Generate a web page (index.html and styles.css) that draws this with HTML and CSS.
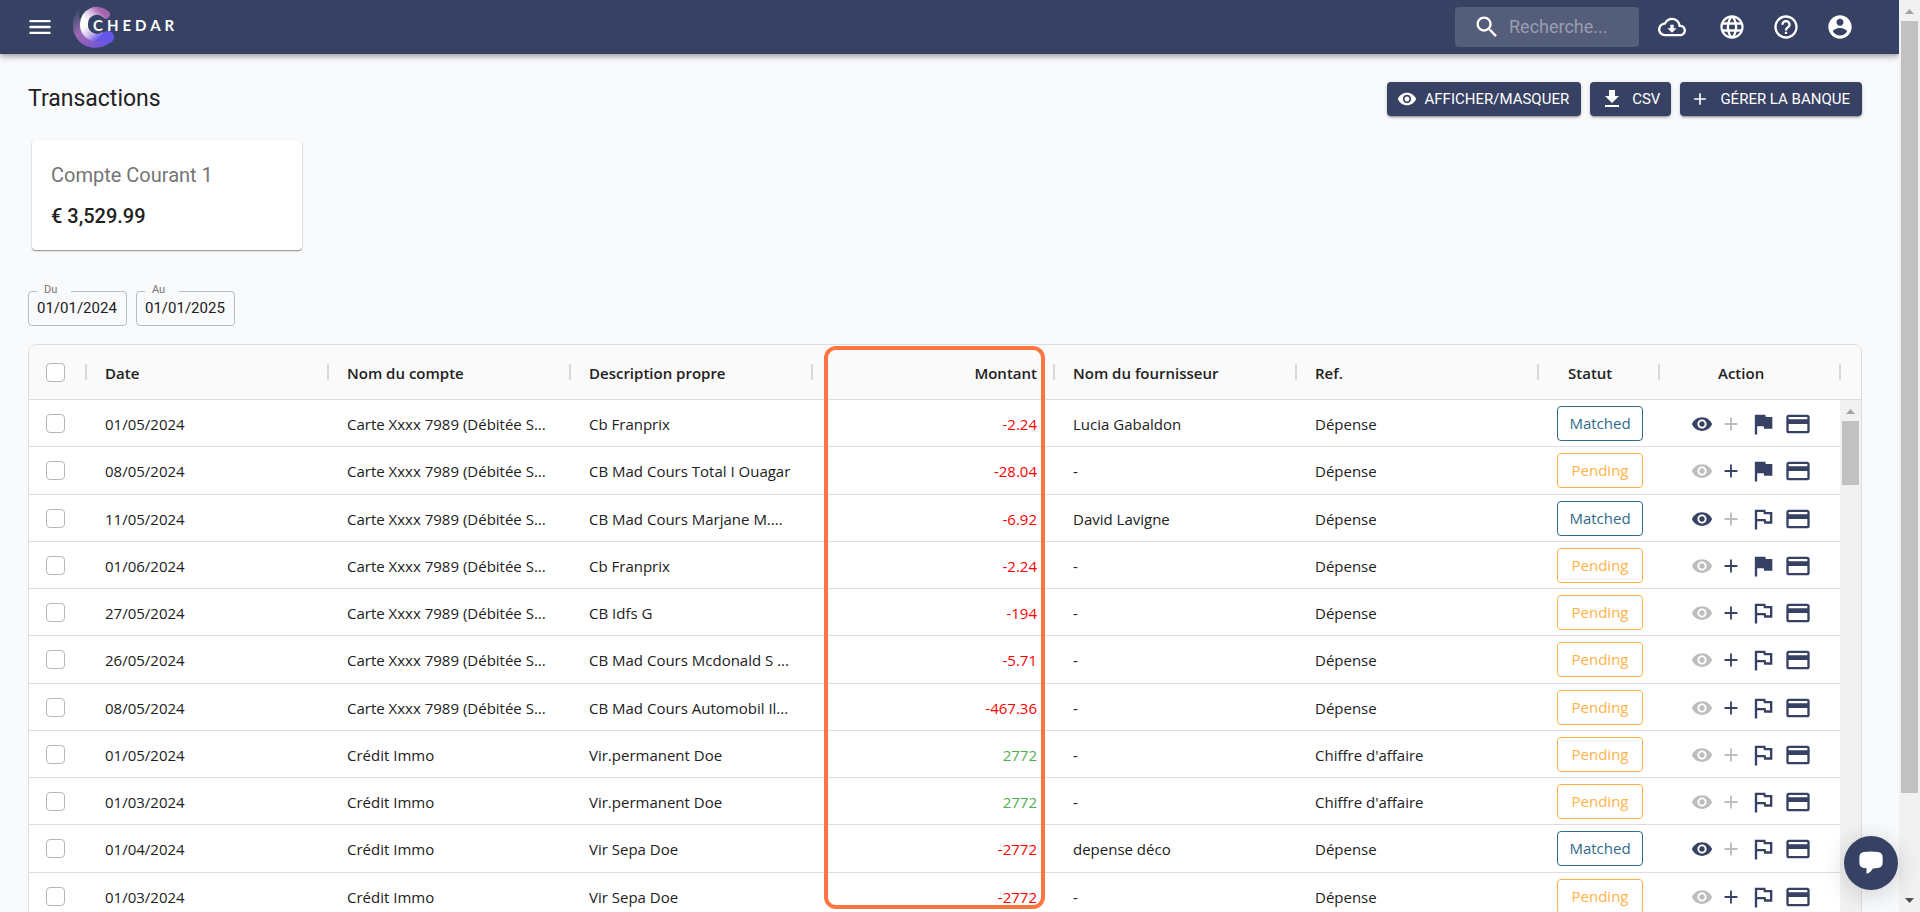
FILE: index.html
```html
<!DOCTYPE html>
<html lang="fr">
<head>
<meta charset="utf-8">
<title>Transactions</title>
<link rel="stylesheet" href="styles.css">
</head>
<body>
<svg class="sprite" aria-hidden="true">
  <symbol id="eye" viewBox="0 0 24 24"><path d="M12 4.5C7 4.5 2.73 7.61 1 12c1.730 4.390 6 7.500 11 7.500s9.270-3.110 11-7.500c-1.730-4.390-6-7.500-11-7.500zM12 17c-2.760 0-5-2.240-5-5s2.240-5 5-5 5 2.240 5 5-2.240 5-5 5zm0-8c-1.660 0-3 1.340-3 3s1.340 3 3 3 3-1.340 3-3-1.340-3-3-3z"/></symbol>
  <symbol id="plus" viewBox="0 0 24 24"><path d="M19 13h-6v6h-2v-6H5v-2h6V5h2v6h6v2z"/></symbol>
  <symbol id="flag" viewBox="0 0 24 24"><path d="M14.400 6 14 4H5v17h2v-7h5.600l.4 2h7V6z"/></symbol>
  <symbol id="flag-o" viewBox="0 0 24 24"><path d="M12.360 6l.4 2H18v6h-3.360l-.4-2H7V6h5.360M14 4H5v17h2v-7h5.600l.4 2h7V6h-5.600L14 4z"/></symbol>
  <symbol id="card" viewBox="0 0 24 24"><path d="M20 4H4c-1.110 0-1.990.89-1.990 2L2 18c0 1.110.89 2 2 2h16c1.110 0 2-.89 2-2V6c0-1.110-.89-2-2-2zm0 14H4v-6h16v6zm0-10H4V6h16v2z"/></symbol>
  <symbol id="menu" viewBox="0 0 24 24"><path d="M3 18h18v-2H3v2zm0-5h18v-2H3v2zm0-7v2h18V6H3z"/></symbol>
  <symbol id="search" viewBox="0 0 24 24"><path d="M15.500 14h-.79l-.28-.27C15.410 12.590 16 11.110 16 9.500 16 5.910 13.090 3 9.500 3S3 5.910 3 9.500 5.910 16 9.500 16c1.610 0 3.090-.59 4.230-1.570l.27.28v.79l5 4.990L20.490 19l-4.990-5zm-6 0C7.010 14 5 11.990 5 9.500S7.010 5 9.500 5 14 7.010 14 9.500 11.990 14 9.500 14z"/></symbol>
  <symbol id="cloud" viewBox="0 0 24 24"><path d="M19.350 10.040C18.670 6.590 15.640 4 12 4 9.110 4 6.600 5.640 5.350 8.040 2.340 8.360 0 10.910 0 14c0 3.310 2.690 6 6 6h13c2.760 0 5-2.240 5-5 0-2.640-2.050-4.780-4.650-4.960zM19 18H6c-2.210 0-4-1.790-4-4 0-2.050 1.530-3.760 3.560-3.970l1.070-.11.5-.95C8.080 7.140 9.940 6 12 6c2.620 0 4.880 1.860 5.390 4.430l.3 1.500 1.530.11c1.560.1 2.780 1.410 2.780 2.960 0 1.650-1.350 3-3 3zm-5.550-8h-2.900v3H8l4 4 4-4h-2.550z"/></symbol>
  <symbol id="globe" viewBox="0 0 24 24"><path d="M11.990 2C6.470 2 2 6.480 2 12s4.470 10 9.990 10C17.520 22 22 17.520 22 12S17.520 2 11.990 2zm6.930 6h-2.950c-.32-1.250-.78-2.450-1.380-3.560 1.840.63 3.370 1.910 4.330 3.560zM12 4.040c.83 1.200 1.480 2.530 1.910 3.960h-3.820c.43-1.430 1.080-2.760 1.910-3.960zM4.260 14C4.100 13.360 4 12.690 4 12s.1-1.360.26-2h3.380c-.08.66-.14 1.320-.14 2s.06 1.340.14 2H4.260zm.82 2h2.950c.32 1.250.78 2.450 1.380 3.560-1.840-.63-3.370-1.900-4.330-3.560zm2.950-8H5.080c.96-1.660 2.490-2.930 4.330-3.560C8.810 5.550 8.350 6.750 8.030 8zM12 19.960c-.83-1.200-1.480-2.530-1.910-3.960h3.820c-.43 1.430-1.080 2.760-1.910 3.960zM14.340 14H9.660c-.09-.66-.16-1.320-.16-2s.07-1.350.16-2h4.680c.09.65.16 1.320.16 2s-.07 1.340-.16 2zm.25 5.560c.6-1.110 1.060-2.310 1.380-3.560h2.950c-.96 1.650-2.490 2.930-4.330 3.560zM16.360 14c.08-.66.14-1.320.14-2s-.06-1.340-.14-2h3.380c.16.640.26 1.310.26 2s-.1 1.360-.26 2h-3.380z"/></symbol>
  <symbol id="help" viewBox="0 0 24 24"><path d="M11 18h2v-2h-2v2zm1-16C6.480 2 2 6.480 2 12s4.480 10 10 10 10-4.480 10-10S17.520 2 12 2zm0 18c-4.410 0-8-3.590-8-8s3.590-8 8-8 8 3.590 8 8-3.590 8-8 8zm0-14c-2.210 0-4 1.790-4 4h2c0-1.100.9-2 2-2s2 .9 2 2c0 2-3 1.750-3 5h2c0-2.250 3-2.500 3-5 0-2.210-1.790-4-4-4z"/></symbol>
  <symbol id="user" viewBox="0 0 24 24"><path d="M12 2C6.480 2 2 6.480 2 12s4.480 10 10 10 10-4.480 10-10S17.520 2 12 2zm0 3c1.660 0 3 1.340 3 3s-1.340 3-3 3-3-1.340-3-3 1.340-3 3-3zm0 14.200c-2.500 0-4.710-1.280-6-3.220.03-1.990 4-3.080 6-3.080 1.990 0 5.970 1.090 6 3.080-1.290 1.940-3.500 3.220-6 3.220z"/></symbol>
  <symbol id="download" viewBox="0 0 24 24"><path d="M19 9h-4V3H9v6H5l7 7 7-7zM5 18v2h14v-2H5z"/></symbol>
</svg>

<header class="topbar">
  <button class="icon-btn menu" aria-label="Menu"><svg class="i28"><use href="#menu"/></svg></button>
  <a class="brand" href="#">
    <svg class="brand-mark" viewBox="0 0 42 42" aria-hidden="true">
      <defs>
        <linearGradient id="outer" x1="0" y1="0" x2="1" y2="1">
          <stop offset="0.05" stop-color="#8d7fa8" stop-opacity="0"/>
          <stop offset="0.4" stop-color="#9a68b4"/>
          <stop offset="0.65" stop-color="#8a5cc4"/>
          <stop offset="0.95" stop-color="#5f56ec"/>
        </linearGradient>
        <linearGradient id="inner" x1="0" y1="0.8" x2="1" y2="0.2">
          <stop offset="0.1" stop-color="#ffffff"/>
          <stop offset="0.5" stop-color="#d9c3e2"/>
          <stop offset="0.9" stop-color="#a764ae"/>
        </linearGradient>
        <linearGradient id="lower" x1="0" y1="0" x2="1" y2="0.8">
          <stop offset="0.1" stop-color="#ffffff"/>
          <stop offset="0.55" stop-color="#cdb6ea"/>
          <stop offset="0.95" stop-color="#6457ea"/>
        </linearGradient>
      </defs>
      <path d="M7 2C-2 10-2 23 3 31c7 12 23 14 34 6a6 6 0 0 0-5-11c-5 4-10 5-15 2C6 22 5 10 7 2z" fill="url(#outer)"/>
      <path d="M33 8.500A13 13 0 0 0 11 18" fill="none" stroke="url(#inner)" stroke-width="8" stroke-linecap="round"/>
      <path d="M11 18A13 13 0 0 0 32 29" fill="none" stroke="url(#lower)" stroke-width="8"/>
      <circle cx="35" cy="31" r="6" fill="#6457ea"/>
    </svg>
    <span class="brand-name">CHEDAR</span>
  </a>
  <label class="search">
    <svg class="i28"><use href="#search"/></svg>
    <input type="search" placeholder="Recherche..." aria-label="Recherche">
  </label>
  <nav class="tools">
    <button class="icon-btn cloud" aria-label="Télécharger"><svg class="i28"><use href="#cloud"/></svg></button>
    <button class="icon-btn" aria-label="Langue"><svg class="i28"><use href="#globe"/></svg></button>
    <button class="icon-btn" aria-label="Aide"><svg class="i28"><use href="#help"/></svg></button>
    <button class="icon-btn" aria-label="Compte"><svg class="i28"><use href="#user"/></svg></button>
  </nav>
</header>

<main class="page">
  <div class="heading">
    <h1>Transactions</h1>
    <button class="btn"><svg class="i20"><use href="#eye"/></svg>AFFICHER/MASQUER</button>
    <button class="btn csv"><svg class="i24"><use href="#download"/></svg>CSV</button>
    <button class="btn bank"><svg class="i20"><use href="#plus"/></svg>GÉRER LA BANQUE</button>
  </div>

  <section class="account">
    <h2>Compte Courant 1</h2>
    <p>€ 3,529.99</p>
  </section>

  <form class="dates">
    <fieldset><legend><label for="from">Du</label></legend><input id="from" type="text" value="01/01/2024"></fieldset>
    <fieldset><legend><label for="to">Au</label></legend><input id="to" type="text" value="01/01/2025"></fieldset>
  </form>

  <div class="grid">
    <table>
      <colgroup><col class="c-check"><col><col><col><col><col><col><col class="c-status"><col class="c-action"><col class="c-scroll"></colgroup>
      <thead>
        <tr>
          <th><input type="checkbox" aria-label="Tout sélectionner"></th>
          <th>Date</th><th>Nom du compte</th><th>Description propre</th>
          <th class="num">Montant<span class="highlight"></span></th>
          <th>Nom du fournisseur</th><th>Ref.</th><th class="h-status">Statut</th><th class="h-action">Action</th><th></th>
        </tr>
      </thead>
      <tbody>
        <tr><td><input type="checkbox" aria-label="Ligne 1"></td><td>01/05/2024</td><td>Carte Xxxx 7989 (Débitée S...</td><td>Cb Franprix</td><td class="num neg">-2.24</td><td>Lucia Gabaldon</td><td>Dépense</td><td class="status"><span class="badge matched">Matched</span></td><td class="action"><div class="acts"><button aria-label="Voir"><svg class="i22"><use href="#eye"/></svg></button><button aria-label="Ajouter" disabled><svg class="i22"><use href="#plus"/></svg></button><button aria-label="Signaler"><svg class="i28"><use href="#flag"/></svg></button><button aria-label="Carte"><svg class="i28"><use href="#card"/></svg></button></div></td><td></td></tr>
        <tr><td><input type="checkbox" aria-label="Ligne 2"></td><td>08/05/2024</td><td>Carte Xxxx 7989 (Débitée S...</td><td>CB Mad Cours Total I Ouagar</td><td class="num neg">-28.04</td><td>-</td><td>Dépense</td><td class="status"><span class="badge pending">Pending</span></td><td class="action"><div class="acts"><button aria-label="Voir" disabled><svg class="i22"><use href="#eye"/></svg></button><button aria-label="Ajouter"><svg class="i22"><use href="#plus"/></svg></button><button aria-label="Signaler"><svg class="i28"><use href="#flag"/></svg></button><button aria-label="Carte"><svg class="i28"><use href="#card"/></svg></button></div></td><td></td></tr>
        <tr><td><input type="checkbox" aria-label="Ligne 3"></td><td>11/05/2024</td><td>Carte Xxxx 7989 (Débitée S...</td><td>CB Mad Cours Marjane M....</td><td class="num neg">-6.92</td><td>David Lavigne</td><td>Dépense</td><td class="status"><span class="badge matched">Matched</span></td><td class="action"><div class="acts"><button aria-label="Voir"><svg class="i22"><use href="#eye"/></svg></button><button aria-label="Ajouter" disabled><svg class="i22"><use href="#plus"/></svg></button><button aria-label="Signaler"><svg class="i28"><use href="#flag-o"/></svg></button><button aria-label="Carte"><svg class="i28"><use href="#card"/></svg></button></div></td><td></td></tr>
        <tr><td><input type="checkbox" aria-label="Ligne 4"></td><td>01/06/2024</td><td>Carte Xxxx 7989 (Débitée S...</td><td>Cb Franprix</td><td class="num neg">-2.24</td><td>-</td><td>Dépense</td><td class="status"><span class="badge pending">Pending</span></td><td class="action"><div class="acts"><button aria-label="Voir" disabled><svg class="i22"><use href="#eye"/></svg></button><button aria-label="Ajouter"><svg class="i22"><use href="#plus"/></svg></button><button aria-label="Signaler"><svg class="i28"><use href="#flag"/></svg></button><button aria-label="Carte"><svg class="i28"><use href="#card"/></svg></button></div></td><td></td></tr>
        <tr><td><input type="checkbox" aria-label="Ligne 5"></td><td>27/05/2024</td><td>Carte Xxxx 7989 (Débitée S...</td><td>CB Idfs G</td><td class="num neg">-194</td><td>-</td><td>Dépense</td><td class="status"><span class="badge pending">Pending</span></td><td class="action"><div class="acts"><button aria-label="Voir" disabled><svg class="i22"><use href="#eye"/></svg></button><button aria-label="Ajouter"><svg class="i22"><use href="#plus"/></svg></button><button aria-label="Signaler"><svg class="i28"><use href="#flag-o"/></svg></button><button aria-label="Carte"><svg class="i28"><use href="#card"/></svg></button></div></td><td></td></tr>
        <tr><td><input type="checkbox" aria-label="Ligne 6"></td><td>26/05/2024</td><td>Carte Xxxx 7989 (Débitée S...</td><td>CB Mad Cours Mcdonald S ...</td><td class="num neg">-5.71</td><td>-</td><td>Dépense</td><td class="status"><span class="badge pending">Pending</span></td><td class="action"><div class="acts"><button aria-label="Voir" disabled><svg class="i22"><use href="#eye"/></svg></button><button aria-label="Ajouter"><svg class="i22"><use href="#plus"/></svg></button><button aria-label="Signaler"><svg class="i28"><use href="#flag-o"/></svg></button><button aria-label="Carte"><svg class="i28"><use href="#card"/></svg></button></div></td><td></td></tr>
        <tr><td><input type="checkbox" aria-label="Ligne 7"></td><td>08/05/2024</td><td>Carte Xxxx 7989 (Débitée S...</td><td>CB Mad Cours Automobil Il...</td><td class="num neg">-467.36</td><td>-</td><td>Dépense</td><td class="status"><span class="badge pending">Pending</span></td><td class="action"><div class="acts"><button aria-label="Voir" disabled><svg class="i22"><use href="#eye"/></svg></button><button aria-label="Ajouter"><svg class="i22"><use href="#plus"/></svg></button><button aria-label="Signaler"><svg class="i28"><use href="#flag-o"/></svg></button><button aria-label="Carte"><svg class="i28"><use href="#card"/></svg></button></div></td><td></td></tr>
        <tr><td><input type="checkbox" aria-label="Ligne 8"></td><td>01/05/2024</td><td>Crédit Immo</td><td>Vir.permanent Doe</td><td class="num pos">2772</td><td>-</td><td>Chiffre d'affaire</td><td class="status"><span class="badge pending">Pending</span></td><td class="action"><div class="acts"><button aria-label="Voir" disabled><svg class="i22"><use href="#eye"/></svg></button><button aria-label="Ajouter" disabled><svg class="i22"><use href="#plus"/></svg></button><button aria-label="Signaler"><svg class="i28"><use href="#flag-o"/></svg></button><button aria-label="Carte"><svg class="i28"><use href="#card"/></svg></button></div></td><td></td></tr>
        <tr><td><input type="checkbox" aria-label="Ligne 9"></td><td>01/03/2024</td><td>Crédit Immo</td><td>Vir.permanent Doe</td><td class="num pos">2772</td><td>-</td><td>Chiffre d'affaire</td><td class="status"><span class="badge pending">Pending</span></td><td class="action"><div class="acts"><button aria-label="Voir" disabled><svg class="i22"><use href="#eye"/></svg></button><button aria-label="Ajouter" disabled><svg class="i22"><use href="#plus"/></svg></button><button aria-label="Signaler"><svg class="i28"><use href="#flag-o"/></svg></button><button aria-label="Carte"><svg class="i28"><use href="#card"/></svg></button></div></td><td></td></tr>
        <tr><td><input type="checkbox" aria-label="Ligne 10"></td><td>01/04/2024</td><td>Crédit Immo</td><td>Vir Sepa Doe</td><td class="num neg">-2772</td><td>depense déco</td><td>Dépense</td><td class="status"><span class="badge matched">Matched</span></td><td class="action"><div class="acts"><button aria-label="Voir"><svg class="i22"><use href="#eye"/></svg></button><button aria-label="Ajouter" disabled><svg class="i22"><use href="#plus"/></svg></button><button aria-label="Signaler"><svg class="i28"><use href="#flag-o"/></svg></button><button aria-label="Carte"><svg class="i28"><use href="#card"/></svg></button></div></td><td></td></tr>
        <tr><td><input type="checkbox" aria-label="Ligne 11"></td><td>01/03/2024</td><td>Crédit Immo</td><td>Vir Sepa Doe</td><td class="num neg">-2772</td><td>-</td><td>Dépense</td><td class="status"><span class="badge pending">Pending</span></td><td class="action"><div class="acts"><button aria-label="Voir" disabled><svg class="i22"><use href="#eye"/></svg></button><button aria-label="Ajouter"><svg class="i22"><use href="#plus"/></svg></button><button aria-label="Signaler"><svg class="i28"><use href="#flag-o"/></svg></button><button aria-label="Carte"><svg class="i28"><use href="#card"/></svg></button></div></td><td></td></tr>
      </tbody>
    </table>
    <div class="scrollbar inner"><i class="up"></i><i class="thumb"></i></div>
  </div>
</main>

<div class="scrollbar outer"><i class="up"></i><i class="thumb"></i><i class="down"></i></div>
<button class="chat" aria-label="Discussion">
  <svg viewBox="0 0 24 24" aria-hidden="true"><path d="M5 1Q12 0 19 1Q23 1.500 23.500 5Q24 9 23.500 13Q23 16.500 19 17L14 17.500Q12 21 8.500 22.500Q7.500 23 7.500 22V17.300L5 17Q1 16.500 .5 13Q0 9 .5 5Q1 1.500 5 1Z"/></svg>
</button>
</body>
</html>
```

FILE: styles.css
```css
* { box-sizing: border-box; }

body {
  margin: 0;
  height: 100vh;
  overflow: hidden;
  padding-right: 21px;
  background: #f9fafc;
  color: #212121;
  font-family: Roboto, sans-serif;
}

button { font: inherit; color: inherit; border: 0; background: none; padding: 0; cursor: pointer; }
svg { display: block; fill: currentColor; flex: none; }
.sprite { position: absolute; width: 0; height: 0; }
.i20 { width: 20px; height: 20px; }
.i22 { width: 22px; height: 22px; }
.i24 { width: 24px; height: 24px; }
.i28 { width: 28px; height: 28px; }

/* Top bar */
.topbar {
  position: relative;
  display: flex;
  align-items: center;
  height: 54px;
  padding: 0 45px 0 26px;
  background: #364163;
  color: #fff;
  box-shadow: 0 2px 4px -1px rgba(0, 0, 0, .2), 0 4px 5px rgba(0, 0, 0, .14), 0 1px 10px rgba(0, 0, 0, .12);
}
.brand { display: flex; align-items: center; margin: 0 auto 0 19px; color: #fff; text-decoration: none; }
.brand-mark { width: 42px; height: 42px; }
.brand-name { margin: -4px 0 0 -22px; position: relative; font: 700 15px/20px Lato, sans-serif; letter-spacing: 4px; }
.search {
  display: flex;
  align-items: center;
  gap: 8px;
  width: 184px;
  height: 40px;
  padding: 0 16px 0 18px;
  border-radius: 4px;
  background: #545d7a;
}
.search input { flex: 1; min-width: 0; padding: 0; border: 0; outline: 0; background: none; color: #fff; font: 18px/24px Roboto, sans-serif; }
.search input::placeholder { color: #989eb0; opacity: 1; }
.tools { display: flex; gap: 26px; margin-left: 19px; }
.cloud { margin-right: 6px; }

/* Page heading */
.page { padding: 28px 37px 0 28px; }
.heading { display: flex; align-items: center; gap: 9px; height: 34px; }
.heading h1 { margin: 0 auto 0 0; font-size: 23px; font-weight: 400; line-height: 32px; }
.btn {
  display: flex;
  align-items: center;
  gap: 8px;
  height: 34px;
  padding: 0 12px 0 10px;
  border-radius: 4px;
  background: #364163;
  color: #fff;
  font-size: 15px;
  line-height: 28px;
  box-shadow: 0 3px 1px -2px rgba(0, 0, 0, .2), 0 2px 2px rgba(0, 0, 0, .14), 0 1px 5px rgba(0, 0, 0, .12);
}
.btn.csv { padding: 0 11px 0 10px; }
.btn.bank { gap: 10px; }

/* Account card */
.account {
  width: 270px;
  margin: 24px 0 0 4px;
  padding: 22px 19px 21px;
  border-radius: 4px;
  background: #fff;
  box-shadow: 0 1px 1px rgba(0, 0, 0, .35), 0 1px 3px rgba(0, 0, 0, .15);
}
.account h2 { margin: 0; font-size: 20px; font-weight: 400; line-height: 26px; color: #757575; }
.account p { margin: 15px 0 0; font-size: 20px; font-weight: 500; line-height: 26px; }

/* Date range */
.dates { display: flex; gap: 9px; margin-top: 34px; }
.dates fieldset { width: 99px; height: 42px; margin: 0; padding: 0 8px; border: 1px solid #babbbd; border-radius: 4px; }
.dates legend { padding: 0 14px 0 7px; font-size: 11px; line-height: 14px; color: #757575; }
.dates label { display: block; height: 14px; line-height: 12px; }
.dates input { display: block; width: 100%; padding: 0; border: 0; background: none; font: 15px/20px Roboto, sans-serif; color: #212121; }

/* Transactions table */
.grid {
  position: relative;
  margin-top: 18px;
  border: 1px solid #dcdde0;
  border-radius: 8px 8px 0 0;
  background: #fff;
  font-family: "Open Sans", "Noto Sans", sans-serif;
}
table { width: 100%; table-layout: fixed; border-collapse: separate; border-spacing: 0; font-size: 15px; line-height: 20px; }
.c-check { width: 58px; }
.c-status { width: 121px; }
.c-action { width: 181px; }
.c-scroll { width: 20px; }
th, td { padding: 0 18px; border-bottom: 1px solid #dcdde0; text-align: left; white-space: nowrap; }
th { position: relative; height: 55px; padding-top: 2px; background: #fafafa; font-weight: 600; }
th:first-child, td:first-child { padding: 0 17px; }
th:first-child { border-top-left-radius: 8px; }
th:last-child { border-top-right-radius: 8px; }
th:not(:last-child)::after { content: ""; position: absolute; top: 19px; right: 0; width: 2px; height: 16px; background: #d8d8d9; }
td { height: 47px; padding-top: 1px; }
tbody tr:nth-child(4n+2) td { height: 48px; }
.num { text-align: right; }
.neg { color: #f00; }
.pos { color: #4caf50; }
th.h-status { padding-left: 29px; }
th.h-action { padding-left: 58px; }
td.status { padding-top: 0; }
td.action { padding-left: 31px; }

input[type="checkbox"] {
  appearance: none;
  display: block;
  width: 19px;
  height: 19px;
  margin: 0;
  border: 1px solid #b5b7ba;
  border-radius: 4px;
  background: #fff;
}

.badge { display: block; width: 86px; height: 35px; border: 1px solid; border-radius: 4px; text-align: center; line-height: 33px; }
.matched { color: #2f6b8c; }
.pending { color: #ffb248; }
.acts { display: flex; align-items: center; gap: 7px; color: #364163; }
.acts button:disabled { color: #bdbdbd; }

/* Frame drawn round the amount column */
.highlight {
  position: absolute;
  z-index: 2;
  top: 1px;
  left: 11px;
  right: 10px;
  height: 563px;
  border: 4px solid #ff7542;
  border-radius: 12px;
}

/* Scrollbars */
.scrollbar { background: #f1f1f1; }
.scrollbar i { position: absolute; left: 2px; right: 2px; }
.scrollbar .thumb { background: #c1c1c1; }
.scrollbar .up, .scrollbar .down { height: 5px; margin: 0 4px; background: #a3a3a3; clip-path: polygon(50% 0, 100% 100%, 0 100%); }
.scrollbar .down { background: #505050; clip-path: polygon(0 0, 100% 0, 50% 100%); }
.inner { position: absolute; top: 55px; right: 0; bottom: 0; width: 21px; }
.inner .up { top: 9px; }
.inner .thumb { top: 21px; height: 64px; }
.outer { position: fixed; top: 0; right: 0; bottom: 0; width: 21px; }
.outer .up { top: 9px; }
.outer .thumb { top: 21px; bottom: 119px; }
.outer .down { bottom: 9px; }

.chat {
  position: fixed;
  z-index: 3;
  right: 22px;
  bottom: 22px;
  display: grid;
  place-items: center;
  width: 54px;
  height: 54px;
  border-radius: 50%;
  background: #364163;
  color: #fff;
  box-shadow: 0 4px 24px rgba(0, 0, 0, .18);
}
.chat svg { width: 24px; height: 24px; }
```
